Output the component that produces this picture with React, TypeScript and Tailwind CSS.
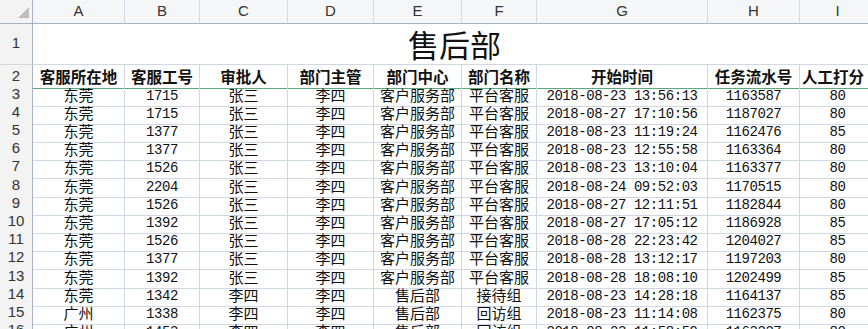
import React from 'react';

type Row = [string, string, string, string, string, string, string, string, string];

const rows: Row[] = [
  ['东莞', '1715', '张三', '李四', '客户服务部', '平台客服', '2018-08-23 13:56:13', '1163587', '80'],
  ['东莞', '1715', '张三', '李四', '客户服务部', '平台客服', '2018-08-27 17:10:56', '1187027', '80'],
  ['东莞', '1377', '张三', '李四', '客户服务部', '平台客服', '2018-08-23 11:19:24', '1162476', '85'],
  ['东莞', '1377', '张三', '李四', '客户服务部', '平台客服', '2018-08-23 12:55:58', '1163364', '80'],
  ['东莞', '1526', '张三', '李四', '客户服务部', '平台客服', '2018-08-23 13:10:04', '1163377', '80'],
  ['东莞', '2204', '张三', '李四', '客户服务部', '平台客服', '2018-08-24 09:52:03', '1170515', '80'],
  ['东莞', '1526', '张三', '李四', '客户服务部', '平台客服', '2018-08-27 12:11:51', '1182844', '80'],
  ['东莞', '1392', '张三', '李四', '客户服务部', '平台客服', '2018-08-27 17:05:12', '1186928', '85'],
  ['东莞', '1526', '张三', '李四', '客户服务部', '平台客服', '2018-08-28 22:23:42', '1204027', '85'],
  ['东莞', '1377', '张三', '李四', '客户服务部', '平台客服', '2018-08-28 13:12:17', '1197203', '80'],
  ['东莞', '1392', '张三', '李四', '客户服务部', '平台客服', '2018-08-28 18:08:10', '1202499', '85'],
  ['东莞', '1342', '李四', '李四', '售后部', '接待组', '2018-08-23 14:28:18', '1164137', '85'],
  ['广州', '1338', '李四', '李四', '售后部', '回访组', '2018-08-23 11:14:08', '1162375', '80'],
  ['广州', '1453', '李四', '李四', '售后部', '回访组', '2018-08-23 11:58:59', '1163227', '80'],
];

const headers = ['客服所在地', '客服工号', '审批人', '部门主管', '部门中心', '部门名称', '开始时间', '任务流水号', '人工打分'];
const letters = ['A', 'B', 'C', 'D', 'E', 'F', 'G', 'H', 'I', ''];

// numeric columns use the mono face, the rest the CJK face
const mono = [false, true, false, false, false, false, true, true, true];

const cols = 'grid grid-cols-[33px_92px_75px_88px_86px_88px_75px_171px_92px_76px]';
const cjk = "font-['Noto_Sans_CJK_SC',sans-serif]";
const monoFont = "font-['Liberation_Mono','Noto_Sans_CJK_SC',monospace] text-[14px] tracking-[-0.45px] pt-[3px]";
const headFont = "font-['Liberation_Sans',sans-serif] text-[15px] text-[#333]";

const tallRows = [4, 9];

const RowHead: React.FC<{ n: number; className?: string }> = ({ n, className }) => (
  <div
    className={`flex items-center justify-center bg-[#f3f3f3] border-r border-r-[#a9b3c6] border-b border-b-[#d3d8e1] ${headFont} ${className ?? ''}`}
  >
    {n}
  </div>
);

export default function App() {
  return (
    <div className="relative w-[868px] h-[329px] overflow-hidden bg-white text-[#111]">
      <div className="w-[876px]">
        {/* column letters */}
        <div className={`${cols} h-[22px]`}>
          <div className="relative bg-[#f3f3f3] border-r border-r-[#a9b3c6] border-b border-b-[#a9b3c6]">
            <svg className="absolute left-[18px] top-[7px]" width="11" height="11" viewBox="0 0 11 11">
              <polygon points="11,0 11,11 0,11" fill="#bdbdbd" />
            </svg>
          </div>
          {letters.map((l, i) => (
            <div
              key={i}
              className={`flex items-center justify-center bg-[#f5f6f7] border-r border-r-[#d3d8e1] border-b border-b-[#a9b3c6] ${headFont}`}
            >
              {l}
            </div>
          ))}
        </div>

        {/* title row */}
        <div className={`${cols} h-[43px]`}>
          <RowHead n={1} />
          <div className={`col-span-9 flex items-end justify-center border-b border-b-[#d0d7e5] ${cjk} text-[31px] leading-[40px]`}>
            售后部
          </div>
        </div>

        {/* field headers */}
        <div className={`${cols} h-[18px]`}>
          <RowHead n={2} className="border-b-[#5ea67d]" />
          {headers.map((h, i) => (
            <div
              key={h}
              className={`flex items-center justify-center whitespace-nowrap overflow-visible border-r border-r-[#d0d7e5] border-b border-b-[#5ea67d] ${cjk} font-bold text-[15.5px] leading-none ${i === 8 ? 'justify-start pl-[2px]' : ''}`}
            >
              {h}
            </div>
          ))}
          <div className="border-b border-b-[#5ea67d]" />
        </div>

        {/* data */}
        {rows.map((r, ri) => (
          <div key={ri} className={`${cols} ${tallRows.includes(ri) ? 'h-[19px]' : 'h-[18px]'}`}>
            <RowHead n={ri + 3} />
            {r.map((v, ci) => (
              <div
                key={ci}
                className={`flex items-center justify-center whitespace-nowrap overflow-hidden border-r border-r-[#d0d7e5] border-b border-b-[#d0d7e5] leading-none ${mono[ci] ? monoFont : `${cjk} text-[15px]`}`}
              >
                {v}
              </div>
            ))}
            <div className="border-r border-r-[#d0d7e5] border-b border-b-[#d0d7e5]" />
          </div>
        ))}
      </div>
    </div>
  );
}
